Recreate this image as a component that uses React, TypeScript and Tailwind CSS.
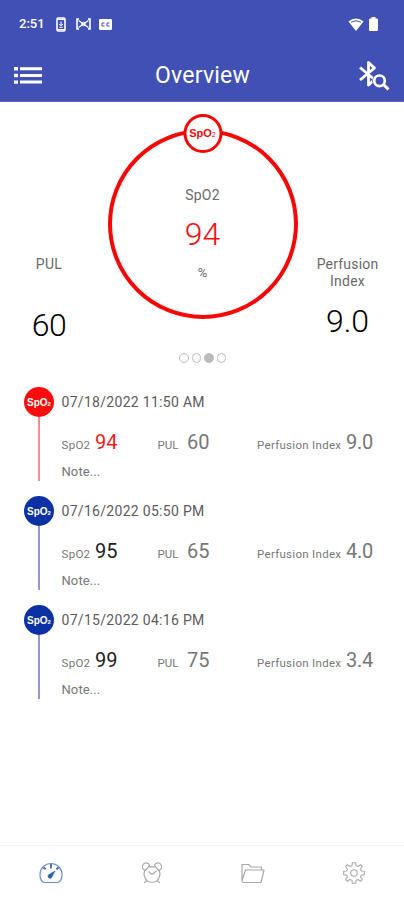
type Reading = {
  date: string;
  spo2: string;
  pul: string;
  pi: string;
  alert?: boolean;
};

const readings: Reading[] = [
  { date: "07/18/2022 11:50 AM", spo2: "94", pul: "60", pi: "9.0", alert: true },
  { date: "07/16/2022 05:50 PM", spo2: "95", pul: "65", pi: "4.0" },
  { date: "07/15/2022 04:16 PM", spo2: "99", pul: "75", pi: "3.4" },
];

function StatusBar() {
  return (
    <div className="flex h-12 items-center pl-[19px] pr-[26px]">
      <span className="w-[37px] text-[13px] font-medium leading-4">2:51</span>
      <svg width="10" height="15" viewBox="0 0 10 15" fill="none" stroke="currentColor">
        <rect x="1" y="1" width="8" height="13" rx="1.2" strokeWidth="1.6" />
        <path d="M1 2.3h8M1 12.7h8" strokeWidth="1.2" />
        <path d="M5 4.5v4M3.2 7 5 8.9 6.8 7M3.3 10.3h3.4" strokeWidth="1" />
      </svg>
      <svg className="ml-[10px]" width="15" height="12" viewBox="0 0 15 12" fill="none" stroke="currentColor">
        <path d="M3 1H1v10h2M12 1h2v10h-2" strokeWidth="1.6" />
        <path d="M2.5 2.5 7.5 6l5-3.5M2.5 9.5l5-3.5 5 3.5" strokeWidth="1.3" />
        <circle cx="7.5" cy="6" r="1.8" strokeWidth="1" />
      </svg>
      <svg className="ml-[8px]" width="13" height="11" viewBox="0 0 13 11">
        <rect width="13" height="11" rx="1.2" fill="currentColor" />
        <path d="M5.5 4H3v3h2.5M10.5 4H8v3h2.5" fill="none" stroke="#4150b5" strokeWidth="1" />
      </svg>
      <svg className="ml-auto" width="16" height="13" viewBox="0 0 16 13">
        <path d="M8 13 .5 3.5Q4 .5 8 .5t7.5 3Z" fill="currentColor" />
        <path d="M3 4.2Q8 1.2 13 4.2" fill="none" stroke="#4150b5" strokeWidth="1" />
      </svg>
      <svg className="ml-[5px]" width="9" height="14" viewBox="0 0 9 14" fill="currentColor">
        <path d="M2.5 0h4v1.5h1.3Q9 1.5 9 2.7v10Q9 14 7.8 14H1.2Q0 14 0 12.7v-10Q0 1.5 1.2 1.5h1.3Z" />
      </svg>
    </div>
  );
}

function Header() {
  return (
    <header className="h-[102px] border-b border-[#5a67bd] bg-[#4150b5] text-white">
      <StatusBar />
      <div className="flex h-[54px] items-center justify-between px-[14px]">
        <svg width="28" height="17" viewBox="0 0 28 17" fill="currentColor">
          <path d="M0 0h4v3.4H0zM0 6.8h4v3.4H0zM0 13.4h4v3.4H0z" />
          <path d="M6 .2h22v3H6zM6 7h22v3H6zM6 13.6h22v3H6z" />
        </svg>
        <h1 className="pl-[4px] pt-[2px] text-[23px] leading-7 tracking-[0.2px]">Overview</h1>
        <svg width="31" height="31" viewBox="0 0 31 31" fill="none" stroke="currentColor">
          <path d="M1 7.5 15.500 19.500 9.500 25V2.500l6 5.500L1 20" strokeWidth="2.8" strokeLinejoin="round" />
          <circle cx="20.500" cy="20.800" r="7.200" fill="#4150b5" stroke="none" />
          <circle cx="20.500" cy="20.800" r="5.300" strokeWidth="2.700" />
          <path d="m24.500 24.500 5 5" strokeWidth="3" />
        </svg>
      </div>
    </header>
  );
}

function Gauge() {
  return (
    <section className="grid h-[241px] grid-cols-[98px_1fr_98px] pl-px text-[#6a6a6a]">
      <div className="flex flex-col items-center pr-[2px] pt-[153px]">
        <span className="text-[14px] leading-[18px] tracking-[0.3px]">PUL</span>
        <span className="mt-[34px] text-[32px] font-light leading-9 tracking-[-0.5px] text-black">60</span>
      </div>
      <div className="relative mx-auto mt-[27px] flex size-[190px] flex-col items-center rounded-full border-[4px] border-[#f40808]">
        <span className="absolute left-1/2 top-[-19px] flex size-[39px] -translate-x-1/2 items-center justify-center rounded-full border-[3px] border-[#f40808] bg-white font-['Liberation_Sans',sans-serif] text-[11px] font-bold text-[#f40808]">
          SpO<sub className="text-[7px] font-normal">2</sub>
        </span>
        <span className="mt-[53px] text-[14px] leading-[18px] tracking-[0.2px]">SpO2</span>
        <span className="mt-[12px] text-[32px] font-light leading-9 text-[#f01010]">94</span>
        <span className="mt-[12px] text-[13px] leading-[18px]">%</span>
      </div>
      <div className="flex flex-col items-center pr-[15px] pt-[154px]">
        <span className="w-[68px] text-center text-[14px] leading-[17px] tracking-[0.2px]">Perfusion Index</span>
        <span className="mt-[13px] text-[32px] font-light leading-9 text-black">9.0</span>
      </div>
    </section>
  );
}

function Pager() {
  return (
    <div className="flex h-[30px] items-center justify-center gap-[3px] pl-px">
      {[0, 1, 2, 3].map((i) => (
        <span
          key={i}
          className={`size-[9.5px] rounded-full border border-[#bbb] ${i === 2 ? "bg-[#bbb]" : ""}`}
        />
      ))}
    </div>
  );
}

function ReadingRow({ r }: { r: Reading }) {
  return (
    <li className="flex h-[109px] pl-[24px]">
      <div className="flex w-[30px] flex-col items-center">
        <span
          className={`flex size-[30px] items-center justify-center rounded-full font-['Liberation_Sans',sans-serif] text-[10px] font-bold text-white ${
            r.alert ? "bg-[#fb0d0d]" : "bg-[#0b31a5]"
          }`}
        >
          SpO<sub className="text-[6px]">2</sub>
        </span>
        <span className={`h-[64px] w-[1.5px] ${r.alert ? "bg-[#f98b94]" : "bg-[#9898c8]"}`} />
      </div>
      <div className="flex-1 pl-[7.5px] text-[#777]">
        <div className="pt-[6px] text-[14px] leading-[18px] tracking-[0.3px] text-[#5c5c5c]">{r.date}</div>
        <div className="mt-[19px] flex items-baseline leading-6">
          <span className="w-[33.5px] text-[11.5px] tracking-[0.3px]">SpO2</span>
          <span className={`w-[62.5px] text-[20px] ${r.alert ? "text-[#f01c1c]" : "text-[#222]"}`}>{r.spo2}</span>
          <span className="w-[29.5px] text-[11.5px]">PUL</span>
          <span className="w-[70px] text-[20px]">{r.pul}</span>
          <span className="w-[89px] text-[11.5px] tracking-[0.3px]">Perfusion Index</span>
          <span className="text-[20px] tracking-[-0.2px]">{r.pi}</span>
        </div>
        <div className="mt-[6px] text-[13px] leading-[18px] tracking-[0.1px]">Note...</div>
      </div>
    </li>
  );
}

function TabBar() {
  return (
    <nav className="mt-auto grid h-[55px] grid-cols-4 items-center justify-items-center border-t border-[#f3f3f3] text-[#aaa]">
      <svg width="24" height="22" viewBox="0 0 24 22" fill="none" stroke="#6c8fca" strokeWidth="1.2">
        <path d="M5 20.5Q1 19 1 12.500a11 11 0 0 1 22 0q0 6.500-4 8Z" strokeLinejoin="round" />
        <path d="M12 2v4.500M4.5 5.500l2.200 1.800M19.5 5.500l-2.200 1.800" stroke="#3c6cb5" strokeWidth="1.8" />
        <path d="m16 9-5.500 3.300a2 2 0 1 0 2.500 2.500Z" fill="#2460b0" stroke="#2460b0" strokeWidth=".6" />
      </svg>
      <svg width="22" height="22" viewBox="0 0 22 22" fill="none" stroke="currentColor" strokeWidth="1.2">
        <path d="M8 4.8h6M4.5 7.500a8.500 8.500 0 0 0 2 11.500q4.500 2.500 9 0a8.500 8.500 0 0 0 2-11.500" />
        <path d="M4.5 8.500a3.800 3.800 0 1 1 4-5.500l-1.500 2.500ZM17.5 8.500a3.800 3.800 0 1 0-4-5.500l1.500 2.500ZM6 18.500 3 21M16 18.500 19 21M7.500 9.500l3.500 3 4.500-3.500" />
      </svg>
      <svg width="24" height="21" viewBox="0 0 24 21" fill="none" stroke="currentColor" strokeWidth="1.2" strokeLinejoin="round">
        <path d="M1 18V1.500h6.500l2.500 2.500h10.500v3M1 18l3.500-11H23l-3 12.500H2.500Q1 19.500 1 18Z" />
      </svg>
      <svg width="22" height="22" viewBox="0 0 22 22" fill="none" stroke="currentColor" strokeWidth="1.1" strokeLinejoin="round">
        <path d="M9.300.7h3.400l.4 3 2 .8L17.500 2.600 19.400 4.500 17.500 7l.8 2 3 .3v3.400l-3 .4-.8 2 1.900 2.400-1.900 1.900-2.400-1.900-2 .8-.4 3H9.300l-.4-3-2-.8-2.400 1.900-1.900-1.900L4.500 15.100l-.8-2-3-.4V9.300l3-.3.800-2-1.900-2.500 1.900-1.900 2.400 1.900 2-.8Z" />
        <circle cx="11" cy="11" r="3.200" />
      </svg>
    </nav>
  );
}

export default function App() {
  return (
    <div className="flex h-[900px] w-[404px] flex-col bg-white font-['Roboto',sans-serif]">
      <Header />
      <Gauge />
      <Pager />
      <ul className="pt-[14px]">
        {readings.map((r) => (
          <ReadingRow key={r.date} r={r} />
        ))}
      </ul>
      <TabBar />
    </div>
  );
}
